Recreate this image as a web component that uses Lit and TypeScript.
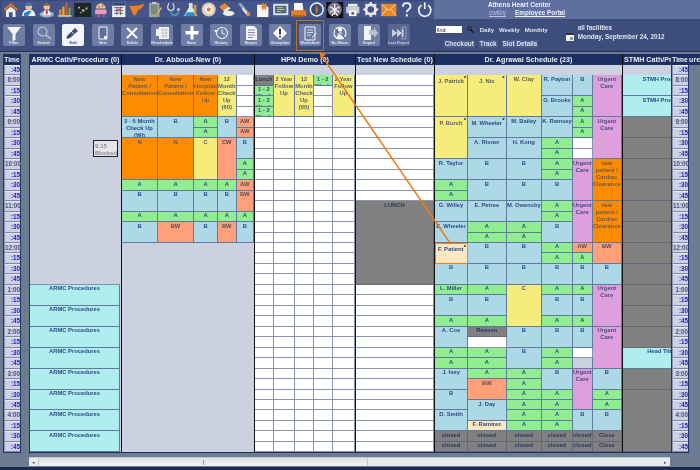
import { LitElement, html, css, svg } from "lit";
import { customElement } from "lit/decorators.js";

const RH = 10.47;

// "label|kind|span|*"  kinds: o orange, y yellow, b blue, g green, s salmon, p plum,
// c cyan, x gray, m cream picked, n cream, w white, l light, e empty
const rep = (s: string, n: number) => Array(n).fill(s);
const NP = "New\nPatient /\nConsultation|o|4";
const CC = "new\npatient /\nCardiac\nClearance|o|4";
const UC = "Urgent\nCare|p|4";
const PAIR = "1 - 2\nWeek|g";
const YR = "2 Year\nFollow\nUp|y|4";
const M12 = "12\nMonth\nCheck\nUp\n(60)|y|4";
const CL = rep("closed|x", 2);

interface Col {
  title: string;
  subs: { w: number; cells: string[] }[];
}

const COLS: Col[] = [
  {
    title: "ARMC Cath/Procedure (0)",
    subs: [{ w: 90, cells: ["|e|20", ...rep("ARMC Procedures|c|2", 8)] }],
  },
  {
    title: "Dr. Abboud-New (0)",
    subs: [
      { w: 36, cells: [NP, "2 - 6 Month\nCheck Up\n(Wh|b|2", "N|o|4", "A|g", "B|b|2", "A|g", "B|b|2"] },
      { w: 36, cells: [NP, "B|b|2", "N|o|4", "A|g", "B|b|2", "A|g", "BW|s|2"] },
      { w: 24, cells: ["New\nHospital\nFollow\nUp|o|4", "A|g", "A|g", "C|y|4", "A|g", "B|b|2", "A|g", "B|b|2"] },
      { w: 18.5, cells: [M12, "B|b|2", "CW|s|4", "A|g", "B|b|2", "A|g", "BW|s|2"] },
      { w: 17.5, cells: [...rep("|w", 4), "AW|s", "AW|s", "B|b|2", "A|g", "A|g", "AW|s", "BW|s|2", "A|g", "B|b|2"] },
    ],
  },
  {
    title: "HPN Demo (0)",
    subs: [
      { w: 18.7, cells: ["Lunch|x", ...rep(PAIR, 3), ...rep("|w", 32)] },
      { w: 21.6, cells: [YR, ...rep("|w", 32)] },
      { w: 18.4, cells: [M12, ...rep("|w", 32)] },
      { w: 19, cells: [PAIR, ...rep("|w", 35)] },
      { w: 22.3, cells: [YR, ...rep("|w", 32)] },
    ],
  },
  {
    title: "Test New Schedule (0)",
    subs: [{ w: 78, cells: [...rep("|w", 12), "LUNCH|x|8", ...rep("|w", 16)] }],
  },
  {
    title: "Dr. Agrawal Schedule (23)",
    subs: [
      {
        w: 33,
        cells: ["J. Patrick|y|4|*", "P. Burch|y|4|*", "R. Taylor|b|2", "A|g", "A|g", "G. Willey|b|2", "E. Wheeler|b|2", "F. Patient|m|2|*", "B|b|2",
          "L. Miller|g", "B|b|2", "A|g", "A. Cox|b|2", "A|g", "A|g", "J. Ivey|b|2", "B|b|2", "D. Smith|b|2", ...CL],
      },
      {
        w: 38.6,
        cells: ["J. Nix|y|4|*", "M. Wheeler|b|2|*", "A. Risner|b|2", "B|b|2", "B|b|2", "E. Petree|b|2", "A|g", "A|g", "B|b|2", "B|b|2",
          "A|g", "B|b|2", "A|g", "Reason|x", "|w", "A|g", "A|g", "A|g", "BW|s|2", "J. Day|b|2", "F. Ramirez|n", ...CL],
      },
      {
        w: 35.4,
        cells: ["W. Clay|y|4", "M. Bailey|b|2", "H. Kong|b|2", "B|b|2", "B|b|2", "M. Owensby|b|2", "A|g", "A|g", "B|b|2", "B|b|2",
          "C|y|4", "B|b|2", "B|b|2", ...rep("A|g", 6), ...CL],
      },
      {
        w: 31,
        cells: ["R. Payton|b|2", "O. Brooks|b|2", "K. Ramsey|b|2", ...rep("A|g", 4), "B|b|2", "A|g", "A|g", "B|b|2", "A|g", "A|g", "B|b|2",
          "A|g", "B|b|2", "A|g", "B|b|2", "A|g", "A|g", "B|b|2", ...rep("A|g", 4), ...CL],
      },
      {
        w: 19.6,
        cells: ["B|b|2", ...rep("A|g", 4), "|w", "|w", UC, UC, "AW|s", "A|g", "B|b|2", "A|g", "B|b|2", "A|g", "B|b|2", "|w", "|l", UC, "B|b|2", ...CL],
      },
      {
        w: 29.4,
        cells: [UC, UC, CC, CC, "BW|s|2", "B|b|2", UC, UC, "B|b|2", "A|g", "A|g", "B|b|2", ...rep("Close|x", 2)],
      },
    ],
  },
  {
    title: "STMH Cath/Procedure (0)",
    subs: [
      {
        w: 90,
        cells: [...rep("STMH Procedures|c|2", 2), ...rep("|x|2", 11), "Head Tilt Table|c|2", "|x|2", "|x|6"],
      },
    ],
  },
];

const TIMES = [":45"];
for (const h of ["8", "9", "10", "11", "12", "1", "2", "3", "4"]) {
  TIMES.push(`${h}:00`, ":15", ":30", ":45");
}

const NAV = [
  svg`<path d="M1 9 9 2l8 7-2 1-6-5-6 5z" fill="#d9762a"/><path d="M4 10l5-4 5 4v7H11v-5H7v5H4z" fill="#f2efe6"/>`,
  svg`<path d="M2 16c0-5 3-7 7-7s7 2 7 7z" fill="#e9f1f6"/><path d="M4 13l5-3 3 1-4 5H4z" fill="#2f7fc0"/><circle cx="9" cy="6" r="3.6" fill="#f0bf95"/><path d="M5 5c1-3 7-3 8 0z" fill="#1f6fa8"/>`,
  svg`<ellipse cx="9" cy="14" rx="7.5" ry="3.4" fill="#9fb0c8"/><path d="M5 15c0-4 2-6 4-6s4 2 4 6z" fill="#eef0f4"/><circle cx="9" cy="6" r="3.4" fill="#eec39a"/><path d="M5.6 5c.6-3 6-3 6.8 0z" fill="#8a5a2a"/><path d="M8 9h2v5H8z" fill="#c33"/>`,
  svg`<path d="M2 15h14v1.6H2z" fill="#e8d8a0"/><path d="M3 9h2.4v6H3z" fill="#e8862a"/><path d="M6.4 6h2.4v9H6.4z" fill="#e0b030"/><path d="M9.7 2h2.4v13H9.7z" fill="#d8553a"/><path d="M13 7h2.2v8H13z" fill="#7aa83a"/>`,
  svg`<path d="M0 2h18v15H0z" fill="#1c2626"/><path d="M4 6h2v2H4zM8 9h3v2H8zM12 7h2v2h-2zM6 12h2v1H6z" fill="#a8c0a0"/>`,
  svg`<path d="M3 9h12v5H3z" fill="#e89ab8"/><path d="M4 8c0-7 10-7 10 0z" fill="#eec39a"/><circle cx="6.5" cy="16" r="1.4" fill="#b85a80"/><circle cx="12" cy="16" r="1.4" fill="#b85a80"/><path d="M6 5h2v2H6zM10 4h2v2h-2z" fill="#c07a50"/>`,
  svg`<path d="M2 2h14v15H2z" fill="#f0f0ea"/><path d="M2 2h14v3H2z" fill="#39486e"/><path d="M4 7h10M4 10h10M4 13h10M7 6v9M11 6v9" stroke="#39486e" stroke-width=".8"/><path d="M8 8h3v3H8z" fill="#d8553a"/>`,
  svg`<path d="M1 5c4 1 9 0 16-2-1 4-4 6-7 7-1 3-2 5-4 6-1-3-3-6-5-11z" fill="#e8801c"/>`,
  svg`<path d="M3 2h11v15H3z" fill="#9aa49a"/><path d="M5 4h7v10H5z" fill="#7c8a80"/><path d="M6 1h5v2H6z" fill="#c8c8b8"/><path d="M12 13l4-6" stroke="#e0c040" stroke-width="1.4"/>`,
  svg`<path d="M5 2c-2 4-2 8 2 8s4-4 2-8" fill="none" stroke="#dde6ee" stroke-width="1.2"/><path d="M7 10c0 6 7 7 8 1" fill="none" stroke="#4aa0c8" stroke-width="1.6"/><circle cx="15" cy="9" r="1.6" fill="#bcd"/>`,
  svg`<path d="M7 2h4v5l5 9H2l5-9z" fill="#d8e6ee"/><path d="M5 12h8l2 4H3z" fill="#2f90c8"/><path d="M12 4h3v12h-2z" fill="#c8a040"/>`,
  svg`<circle cx="9" cy="9" r="7.4" fill="#d8d0b8"/><circle cx="9" cy="9" r="4.8" fill="#f2ece0"/><circle cx="9" cy="9" r="2" fill="#d88030"/>`,
  svg`<path d="M1 6l6-4 4 4-6 4z" fill="#e8862a"/><path d="M5 10l6-4 2 2-6 4z" fill="#f2efe6"/><ellipse cx="11" cy="13" rx="6" ry="2.8" fill="#f2efe6"/>`,
  svg`<path d="M2 3l3-1 9 11-2 3z" fill="#8fa8c0"/><path d="M7 7l6 7-1 2-6-7z" fill="#e8e8e0"/><circle cx="13" cy="14" r="2" fill="#e08a30"/>`,
  svg`<path d="M3 4h9l3 3v10H3z" fill="#f8f8f4"/><path d="M9 1l1.4 2.4L13 2l-.6 3L15 6l-2.6 1L13 10l-2.6-2L8 10l.4-3L6 6l2.5-1z" fill="#e8862a"/>`,
  svg`<path d="M1 3h16v12H1z" fill="#dfe4ea"/><path d="M3 5h12v8H3z" fill="#4a6a88"/><path d="M5 7h6M5 9h8M5 11h4" stroke="#d8c068" stroke-width="1"/>`,
  svg`<path d="M4 2h9l1 8H4z" fill="#f8f8f8"/><path d="M1 10h16v6H1z" fill="#e07f20"/><path d="M3 15h12v2H3z" fill="#a85a10"/>`,
  svg`<circle cx="9" cy="9" r="7.6" fill="#eef2f6"/><circle cx="9" cy="9" r="6" fill="#38507c"/><path d="M9 4l1 5-1 5-1-5z" fill="#e8862a"/>`,
  svg`<path d="M0 1h18v17H0z" fill="#111"/><circle cx="9" cy="9" r="7.6" fill="#778"/><path d="M9 3v12M4 6l10 6M14 6 4 12M6 16l3-5 3 5" stroke="#f2f2f2" stroke-width="1.3"/>`,
  svg`<path d="M4 3h10v3H4z" fill="#eee"/><path d="M2 6h14v7H2z" fill="#c9ced8"/><path d="M5 10h8v6H5z" fill="#f8f8f8"/><circle cx="9" cy="13" r="1.7" fill="#667"/>`,
  svg`<circle cx="9" cy="9" r="5" fill="none" stroke="#e8ebf2" stroke-width="3"/><path d="M9 1v3M9 14v3M1 9h3M14 9h3M3.4 3.4l2 2M12.6 12.6l2 2M14.6 3.4l-2 2M3.4 14.6l2-2" stroke="#e8ebf2" stroke-width="2.2"/>`,
  svg`<path d="M1 3h16v13H1z" fill="#e8862a"/><path d="M1.5 3.5 9 10l7.5-6.5M1.5 15.5 7 8.5M16.5 15.5 11 8.5" fill="none" stroke="#f8d8a8" stroke-width="1"/>`,
  svg`<path d="M5 6c0-5 8-5 8 0 0 3-4 3-4 6" fill="none" stroke="#eef1f6" stroke-width="2"/><path d="M8 14h2.2v2.4H8z" fill="#eef1f6"/>`,
  svg`<path d="M5.500 4.500a6.400 6.400 0 1 0 7 0" fill="none" stroke="#eef1f6" stroke-width="1.8"/><path d="M9 1.500v7" stroke="#eef1f6" stroke-width="1.8"/>`,
];

const W = "#f2f4f8";
const TOOLS: { label: string; icon: unknown; cls?: string }[] = [
  { label: "Filter", icon: svg`<path d="M2 2h14L10.500 9v6l-3 1V9z" fill="${W}"/>` },
  { label: "Search", icon: svg`<circle cx="7.500" cy="6.500" r="4.500" fill="none" stroke="#c8cfdf" stroke-width="1.1"/><path d="M11 10l5 4" stroke="#c8cfdf" stroke-width="1.5"/>` },
  { label: "Edit", cls: "bright", icon: svg`<path d="M3 11 11 3l3 3-8 7-3.500 1z" fill="#3d4d7c"/><path d="M5 4 13 12" stroke="#fff" stroke-width=".7"/>` },
  { label: "New", icon: svg`<path d="M5 2h8v12H5z" fill="#5f6e9a" stroke="${W}"/><path d="M10 11h3v3h-3z" fill="${W}"/>` },
  { label: "Delete", icon: svg`<path d="M4 3l10 10M14 3 4 13" stroke="#fff" stroke-width="2"/>` },
  { label: "Reschedule", icon: svg`<path d="M3 4h3V2h10v12H6v-3H3z" fill="${W}"/><path d="M8 5h7M8 8h7M8 11h7M10 3v10M13 3v10" stroke="#aab4c8" stroke-width=".7"/>` },
  { label: "Move", icon: svg`<path d="M7.500 1h3v5h5v3.500h-5v5h-3v-5h-5V6h5z" fill="#fff"/>` },
  { label: "History", icon: svg`<circle cx="10" cy="8" r="5.500" fill="none" stroke="${W}" stroke-width="1.1"/><path d="M10 4.500V8l3 1.500" fill="none" stroke="${W}"/><path d="M2 5h4l-2 3z" fill="${W}"/>` },
  { label: "Report", icon: svg`<path d="M4 1h8l3 3v11H4z" fill="${W}"/><path d="M6 5h7M6 7.500h7M6 10h7M6 12.500h5" stroke="#5f6e9a" stroke-width=".8"/>` },
  { label: "Exception", icon: svg`<path d="M9 1l7 7-7 7-7-7z" fill="#fff"/><path d="M8.200 3.500h1.600v6H8.200zM8.200 10.800h1.600v1.700H8.200z" fill="#111"/>` },
  { label: "Worksheet", cls: "picked", icon: svg`<path d="M4 2h10v13H4z" fill="#6c7ba4" stroke="${W}"/><path d="M6 5h6M6 7.500h6M6 10h4" stroke="${W}" stroke-width=".8"/><path d="M11 13l4-5" stroke="${W}"/>` },
  { label: "No Show", icon: svg`<circle cx="9" cy="8" r="6" fill="none" stroke="${W}" stroke-width="1.2"/><circle cx="9" cy="4.500" r="2.200" fill="${W}"/><path d="M5 14l3-7h2l3 7z" fill="${W}"/><path d="M4 4l10 9" stroke="#3d4d7c"/>` },
  { label: "Export", icon: svg`<path d="M4 1h7v14H4z" fill="${W}"/><path d="M9 5h5V2.500L18 8l-4 5v-3H9z" fill="#b9c1d4"/>` },
  { label: "Last Report", cls: "dim", icon: svg`<path d="M12 2h4v12h-4z" fill="none" stroke="#c8cfdf" stroke-width=".7"/><path d="M2 4v8l5-4zM7 4v8l5-4z" fill="${W}"/><path d="M12 4h1.500v8H12z" fill="${W}"/>` },
];

@customElement("app-root")
export class AppRoot extends LitElement {
  static styles = css`
    :host {
      display: block;
      width: 700px;
      height: 470px;
      font-family: "Liberation Sans", Arial, sans-serif;
    }
    .page {
      position: relative;
      width: 700px;
      height: 470px;
      overflow: hidden;
      background: #6d7c92;
      display: flex;
      flex-direction: column;
      filter: blur(0.3px);
    }
    .nav {
      height: 19px;
      flex: none;
      background: #5f6f9f;
      display: flex;
      position: relative;
    }
    .nav-icons {
      display: flex;
      gap: 0.5px;
      padding: 1px 0 0 2px;
      width: 434px;
      background: #3a4a80;
      box-sizing: border-box;
    }
    .nav-icon {
      width: 17.5px;
      height: 17px;
      flex: none;
      background: #45558a;
      border-radius: 2px;
    }
    .nav-icon svg {
      display: block;
      width: 17.5px;
      height: 17px;
    }
    .brand {
      flex: 1;
      color: #eef1f7;
      font-size: 6.5px;
      font-weight: bold;
      line-height: 8px;
      padding-left: 54px;
    }
    .brand .links {
      display: flex;
      gap: 9px;
      font-size: 6.4px;
      margin-left: 1px;
    }
    .brand .links span {
      text-decoration: underline;
    }
    .brand .links .user {
      color: #b9c3dd;
      font-weight: normal;
    }
    .title {
      padding-top: 1px;
    }
    .toolbar {
      height: 32px;
      flex: none;
      background: #3d4d7c;
      display: flex;
      align-items: flex-start;
      padding: 5px 0 0 3px;
      box-sizing: border-box;
      color: #dfe4ee;
    }
    .tools {
      display: flex;
      gap: 7.6px;
      flex: none;
    }
    .tool {
      position: relative;
      width: 22px;
      height: 22px;
      background: #6e7da6;
      border-radius: 2px;
      display: flex;
      flex-direction: column;
      align-items: center;
      font-size: 3.8px;
      line-height: 5px;
      font-weight: bold;
      color: #e3e7f0;
      white-space: nowrap;
    }
    .tool svg {
      width: 18px;
      height: 16px;
      flex: none;
      margin-top: 1px;
    }
    .tool.bright {
      background: #f4f5f8;
      color: #3d4d7c;
    }
    .tool.dim {
      background: #5d6c97;
      opacity: 0.8;
    }
    .tool.picked::before {
      content: "";
      position: absolute;
      inset: -4px -3px -5px -3px;
      border: 1px solid #b87428;
    }
    .find {
      margin-left: 26px;
      width: 124px;
      flex: none;
      font-size: 6px;
      font-weight: bold;
      display: flex;
      flex-direction: column;
      gap: 7px;
      padding-top: 2px;
    }
    .find-row {
      display: flex;
      align-items: center;
      gap: 5px;
      height: 7px;
    }
    .find input {
      width: 26px;
      height: 7px;
      padding: 0 1px;
      border: 0;
      box-sizing: border-box;
      background: #fff;
      color: #223;
      font: 5.4px "Liberation Sans", Arial, sans-serif;
    }
    .find svg {
      width: 7px;
      height: 7px;
      margin-left: 0;
      margin-right: 1px;
    }
    .track {
      display: flex;
      gap: 4px;
      padding-left: 8px;
      font-size: 6.4px;
    }
    .track span {
      background: #4a5a88;
      padding: 0 1px;
      line-height: 8px;
    }
    .date {
      margin-left: 6px;
      display: flex;
      gap: 4px;
      align-items: flex-end;
      font-size: 6.4px;
      font-weight: bold;
      line-height: 9px;
      white-space: nowrap;
      margin-top: -1px;
    }
    .date svg {
      width: 8px;
      height: 8px;
      margin-bottom: 0;
    }
    .board {
      height: 403px;
      flex: none;
      display: flex;
      padding: 2px 0 0 3px;
      box-sizing: border-box;
      background: #6d7c92;
      border-top: 1px solid #232f55;
    }
    .times {
      width: 18px;
      flex: none;
      height: 399.4px;
      background: #8b96b4;
      border: solid #20356a;
      border-width: 0 1px 1px;
      box-sizing: border-box;
    }
    .time-head {
      height: 11px;
      background: #1b2f62;
      color: #f2f4f8;
      font-size: 6.6px;
      font-weight: bold;
      text-align: center;
      line-height: 11px;
    }
    .time {
      height: ${RH}px;
      box-sizing: border-box;
      background: #ccd2e3;
      border-bottom: 1px solid #7d88a8;
      border-top: 1px solid #e3e7f0;
      margin-left: 1px;
      color: #2626c8;
      font-size: 6.3px;
      font-weight: bold;
      line-height: 8px;
      text-align: right;
    }
    .time.hour {
      color: #4a5478;
    }
    .gutter {
      width: 9px;
      flex: none;
      background: #6b7c8e;
      border-right: 1px solid #20356a;
      box-sizing: border-box;
    }
    .col {
      flex: none;
      box-sizing: border-box;
      height: 399.4px;
      border-left: 1px solid #111;
      overflow: hidden;
      background: #cbd1df;
      border-bottom: 1px solid #1d2f5c;
    }
    .col-first {
      border-left: 0;
    }
    .col-head {
      height: 11px;
      background: #1b2f62;
      color: #e9ecf3;
      font-size: 7.2px;
      font-weight: bold;
      text-align: center;
      line-height: 11px;
      white-space: nowrap;
    }
    .col-head.left {
      text-align: left;
      padding-left: 1px;
    }
    .subs {
      display: flex;
      padding-top: ${RH}px;
    }
    .sub {
      flex: none;
      display: flex;
      flex-direction: column;
    }
    .cell {
      flex: none;
      box-sizing: border-box;
      overflow: hidden;
      position: relative;
      border-right: 1px solid #5f7a9e;
      border-bottom: 1px solid #5f7a9e;
      font-size: 5.8px;
      font-weight: bold;
      line-height: 7px;
      text-align: center;
      white-space: pre-line;
      color: #2c4a86;
      padding-top: 0.5px;
    }
    .o { background: #ff8c00; color: #6b5a4a; }
    .y { background: #f5ec7c; color: #5a6060; }
    .b { background: #add8e6; }
    .g { background: #90ee90; }
    .s { background: #ffa07a; color: #5a4a50; }
    .p { background: #dda0dd; color: #4a4a80; }
    .c { background: #afeeee; }
    .x { background: #808080; color: #26365e; border-color: #667; }
    .m {
      background: #fde8c4;
      border: 1px solid #f08030;
      text-align: left;
      padding-left: 2px;
    }
    .n { background: #fde8c4; }
    .w { background: #fff; border-color: #8a92ad; }
    .l { background: #cbd1df; }
    .e { background: #cbd1df; border: 0; border-bottom: 1px solid #8a92ad; }
    .star {
      padding-top: 2.5px;
    }
    .star i {
      position: absolute;
      top: 0;
      right: 1px;
      font-style: normal;
      color: #111;
      font-size: 6px;
    }
    .tip {
      position: absolute;
      left: 93px;
      top: 140px;
      width: 25px;
      height: 17px;
      box-sizing: border-box;
      border: 1px solid #20222e;
      background: #e6e6ea;
      color: #707070;
      font-size: 6.2px;
      line-height: 7.5px;
      padding: 0.5px 0 0 1px;
    }
    .end {
      flex: 1;
      overflow: hidden;
    }
    .bottom {
      flex: 1;
      padding: 3px 30px 0 29px;
      position: relative;
    }
    .scroll {
      height: 9px;
      background: #e9ebee;
      display: flex;
      align-items: stretch;
      color: #555;
      font-size: 5px;
      line-height: 8px;
      text-align: center;
      border-top: 1px solid #c4c8cf;
      box-sizing: border-box;
    }
    .scroll span {
      width: 9px;
      flex: none;
    }
    .scroll .rest {
      flex: 1;
    }
    .thumb {
      width: 330px;
      flex: none;
      background: linear-gradient(#dfe2e6, #f2f3f5);
      color: #8a8f98;
      letter-spacing: -1px;
      border-left: 1px solid #c4c8cf;
      border-right: 1px solid #c4c8cf;
      box-sizing: border-box;
    }
    .foot {
      position: absolute;
      left: 0;
      right: 0;
      bottom: 0;
      height: 3px;
      background: #1c2a50;
    }
    .arrow {
      position: absolute;
      inset: 0;
      width: 700px;
      height: 470px;
      pointer-events: none;
    }
  `;

  private renderCell(spec: string) {
    const [label, kind, span, star] = spec.split("|");
    const h = Number(span || 1) * RH;
    return html`<div class="cell ${kind} ${star ? "star" : ""}" style="height:${h}px">${label}${star ? html`<i>*</i>` : ""}</div>`;
  }

  private renderCol(col: Col, i: number) {
    const inner = col.subs.reduce((a, s) => a + s.w, 0);
    const last = i === COLS.length - 1;
    const width = i === 0 ? 91 : last ? 49 : inner + 1;
    return html`<div class="col ${i === 0 ? "col-first" : ""}" style="width:${width}px">
      <div class="col-head ${last ? "left" : ""}">${col.title}</div>
      <div class="subs">
        ${col.subs.map(
          (s) => html`<div class="sub" style="width:${s.w}px">${s.cells.map((c) => this.renderCell(c))}</div>`
        )}
      </div>
    </div>`;
  }

  private renderTimes() {
    return html`<div class="times">
      <div class="time-head">Time</div>
      ${TIMES.map((t) => html`<div class="time ${t.startsWith(":") ? "" : "hour"}">${t}</div>`)}
    </div>`;
  }

  render() {
    return html`<div class="page">
      <div class="nav">
        <div class="nav-icons">
          ${NAV.map((n) => html`<div class="nav-icon"><svg viewBox="0 0 18 18">${n}</svg></div>`)}
        </div>
        <div class="brand">
          <div class="title">Athens Heart Center</div>
          <div class="links"><span class="user">cwilcy</span><span>Employee Portal</span></div>
        </div>
      </div>
      <div class="toolbar">
        <div class="tools">
          ${TOOLS.map(
            (t) => html`<div class="tool ${t.cls ?? ""}"><svg viewBox="0 0 18 16">${t.icon}</svg>${t.label}</div>`
          )}
        </div>
        <div class="find">
          <div class="find-row">
            <input value="find" />
            <svg viewBox="0 0 8 8"><circle cx="3" cy="3" r="2" fill="none" stroke="#111" /><path d="M4.500 4.500 7.500 7.500" stroke="#111" stroke-width="1.3" /></svg>
            <span>Daily</span><span>Weekly</span><span>Monthly</span>
          </div>
          <div class="track"><span>Checkout</span><span>Track</span><span>Slot Details</span></div>
        </div>
        <div class="date">
          <svg viewBox="0 0 8 8"><path d="M0 0h8v8H0z" fill="#f0f0f0" /><path d="M0 0h8v2H0z" fill="#333" /><path d="M4 4h3v3H4z" fill="#999" /></svg>
          <div>all facilities<br />Monday, September 24, 2012</div>
        </div>
      </div>
      <div class="board">
        ${this.renderTimes()}
        <div class="gutter"></div>
        ${COLS.map((c, i) => this.renderCol(c, i))}
        ${this.renderTimes()}
        <div class="end"><div class="col-head">ure</div></div>
      </div>
      <div class="bottom">
        <div class="scroll"><span>◂</span><div class="thumb">|||</div><div class="rest"></div><span>▸</span></div>
        <div class="foot"></div>
      </div>
      <div class="tip">9:15 Blocked</div>
      <svg class="arrow" viewBox="0 0 700 470">
        <path d="M322 56 450 243" stroke="#f07a10" stroke-width="1.4" fill="none" />
        <path d="M319.500 52 326 54.500 320.500 58.500z" fill="#f07a10" />
      </svg>
    </div>`;
  }
}
